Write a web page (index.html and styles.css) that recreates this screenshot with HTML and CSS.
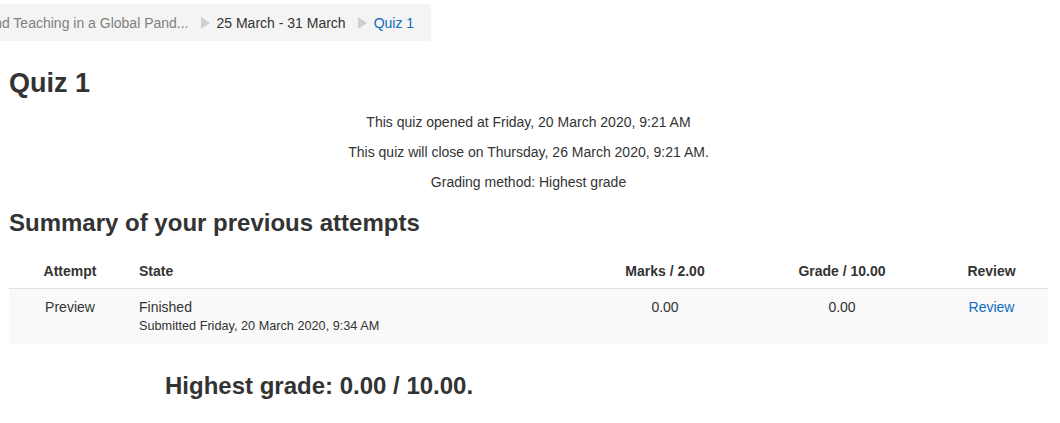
FILE: index.html
```html
<!DOCTYPE html>
<html lang="en">
<head>
  <meta charset="UTF-8" />
  <title>Quiz 1</title>
  <link rel="stylesheet" href="styles.css">
</head>
<body>

  <nav class="breadcrumb">
    <a href="#" class="crumb crumb-muted">Learning and Teaching in a Global Pand...</a>
    <span class="sep"></span>
    <a href="#" class="crumb">25 March - 31 March</a>
    <span class="sep"></span>
    <a href="#" class="crumb crumb-active">Quiz 1</a>
  </nav>

  <div class="page">
    <h2 class="quiz-title">Quiz 1</h2>

    <div class="quizinfo">
      <p>This quiz opened at Friday, 20 March 2020, 9:21 AM</p>
      <p>This quiz will close on Thursday, 26 March 2020, 9:21 AM.</p>
      <p>Grading method: Highest grade</p>
    </div>

    <h3 class="summary-title">Summary of your previous attempts</h3>

    <table class="attempts">
      <thead>
        <tr>
          <th class="c-attempt">Attempt</th>
          <th class="c-state">State</th>
          <th class="c-marks">Marks / 2.00</th>
          <th class="c-grade">Grade / 10.00</th>
          <th class="c-review">Review</th>
        </tr>
      </thead>
      <tbody>
        <tr>
          <td class="c-attempt">Preview</td>
          <td class="c-state">
            Finished
            <span class="submitted">Submitted Friday, 20 March 2020, 9:34 AM</span>
          </td>
          <td class="c-marks">0.00</td>
          <td class="c-grade">0.00</td>
          <td class="c-review"><a href="#">Review</a></td>
        </tr>
      </tbody>
    </table>

    <h3 class="feedback">Highest grade: 0.00 / 10.00.</h3>
  </div>

</body>
</html>
```

FILE: styles.css
```css
body {
  margin: 0;
  font-family: "Liberation Sans", Arial, sans-serif;
  font-size: 14px;
  color: #333;
  background: #fff;
}

a {
  text-decoration: none;
}

.breadcrumb {
  display: inline-flex;
  align-items: center;
  margin: 4px 0 0 -90px;
  padding: 0 17px 0 18px;
  height: 37px;
  background-color: #f4f4f4;
  border-radius: 4px;
  white-space: nowrap;
}

.crumb {
  color: #333;
}

.crumb-muted {
  color: #808080;
}

.crumb-active {
  color: #0f6cbf;
}

/* little grey arrow between crumbs */
.sep {
  width: 0;
  height: 0;
  margin: 0 7px 0 12px;
  border-top: 6px solid transparent;
  border-bottom: 6px solid transparent;
  border-left: 9px solid #cfcfcf;
}

.page {
  padding: 0 12px 0 9px;
}

.quiz-title {
  margin: 26px 0 13px;
  font-size: 27px;
  line-height: 32px;
}

.quizinfo {
  text-align: center;
}

.quizinfo p {
  margin: 0 0 10px;
  line-height: 20px;
}

.summary-title {
  margin: 16px 0 14px;
  font-size: 24px;
  line-height: 30px;
}

.attempts {
  width: 100%;
  border-collapse: collapse;
}

.attempts th,
.attempts td {
  padding: 8px 8px;
  line-height: 20px;
  vertical-align: top;
}

.attempts th {
  font-weight: bold;
  padding: 9px 8px 7px;
}

.attempts tbody tr {
  background-color: #f9f9f9;
  border-top: 1px solid #dee2e6;
}

.c-attempt {
  width: 106px;
  text-align: center;
}

.c-state {
  text-align: left;
}

.c-marks {
  width: 152px;
  text-align: center;
}

.c-grade {
  width: 170px;
  text-align: center;
}

.c-review {
  width: 97px;
  text-align: center;
}

.c-review a {
  color: #0f6cbf;
}

.submitted {
  display: block;
  font-size: 12.7px;
  line-height: 19px;
}

.feedback {
  margin: 27px 0 0 156px;
  font-size: 24px;
  line-height: 30px;
}
```
